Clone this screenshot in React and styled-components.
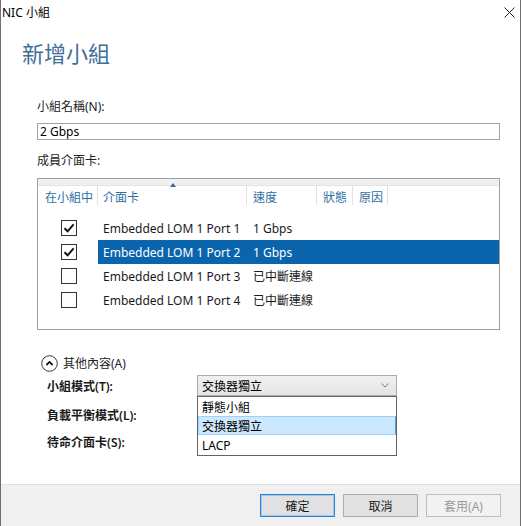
import React from "react";
import styled, { createGlobalStyle } from "styled-components";

const Global = createGlobalStyle`
  html, body { margin: 0; padding: 0; background: #fff; }
  body {
    font-family: "Segoe UI", "Noto Sans", "Noto Sans CJK TC", sans-serif;
    font-size: 12px;
    color: #1a1a1a;
  }
`;

const Window = styled.div`
  width: 521px;
  height: 526px;
  box-sizing: border-box;
  border-left: 1px solid #6f6f6f;
  border-right: 1px solid #6f6f6f;
  display: flex;
  flex-direction: column;
  background: #fff;
  position: relative;
`;

const TitleBar = styled.div`
  height: 24px;
  display: flex;
  align-items: center;
  justify-content: space-between;
  padding: 0 5px 0 1px;
  font-size: 12px;
  color: #000;
`;

const Heading = styled.h1`
  margin: 17px 0 0 21px;
  font-size: 22px;
  font-weight: 400;
  line-height: 24px;
  color: #3f6f96;
`;

const Body = styled.div`
  padding: 0 20px 0 36px;
  display: flex;
  flex-direction: column;
`;

const Label = styled.div`
  margin-top: ${(p) => p.$top}px;
  line-height: 16px;
  color: #222;
`;

const TextBox = styled.div`
  margin-top: 8px;
  height: 17px;
  border: 1px solid #a3a3a3;
  box-sizing: border-box;
  padding: 0 2px;
  line-height: 15px;
  color: #000;
`;

const ListBox = styled.div`
  margin-top: 9px;
  height: 152px;
  border: 1px solid #a0a0a0;
  box-sizing: border-box;
  display: flex;
  flex-direction: column;
`;

const TopStrip = styled.div`
  height: 6px;
  background: #f0f0f0;
  border-bottom: 1px solid #e3e3e3;
`;

const HeaderRow = styled.div`
  display: flex;
  height: 19px;
  margin-bottom: 11px;
`;

const HeadCell = styled.div`
  width: ${(p) => p.$w}px;
  flex: ${(p) => (p.$w ? "none" : "1")};
  box-sizing: border-box;
  border-right: ${(p) => (p.$last ? "none" : "1px solid #e2e2e2")};
  padding-left: ${(p) => p.$pad ?? 6}px;
  color: #2f6ea5;
  line-height: 24px;
  position: relative;
  white-space: nowrap;
`;

const SortArrow = styled.span`
  position: absolute;
  left: 72px;
  top: -3px;
  width: 0;
  height: 0;
  border-left: 3px solid transparent;
  border-right: 3px solid transparent;
  border-bottom: 4px solid #3c6e96;
`;

const Row = styled.div`
  display: flex;
  height: 24px;
  align-items: center;
`;

const CheckCell = styled.div`
  width: 60px;
  display: flex;
  align-items: center;
  padding-left: 23px;
  box-sizing: border-box;
`;

const Check = styled.div`
  width: 16px;
  height: 16px;
  box-sizing: border-box;
  border: 1px solid #333;
  background: #fff;
  display: flex;
  align-items: center;
  justify-content: center;
`;

const RowBody = styled.div`
  flex: 1;
  height: 24px;
  display: flex;
  align-items: center;
  background: ${(p) => (p.$selected ? "#0b65ad" : "transparent")};
  color: ${(p) => (p.$selected ? "#fff" : "#1a1a1a")};
`;

const Cell = styled.div`
  width: ${(p) => p.$w}px;
  padding-left: ${(p) => p.$pad}px;
  box-sizing: border-box;
  white-space: nowrap;
`;

const Expander = styled.div`
  margin-top: 24px;
  margin-left: 4px;
  display: flex;
  align-items: center;
  gap: 5px;
  height: 18px;
  color: #222;
`;

const FieldRow = styled.div`
  display: flex;
  align-items: center;
  height: ${(p) => p.$h}px;
  margin-top: ${(p) => p.$top}px;
  padding-left: 10px;
`;

const FieldLabel = styled.div`
  width: 150px;
  font-weight: 600;
  color: #1a1a1a;
`;

const ComboWrap = styled.div`
  position: relative;
  width: 200px;
`;

const Combo = styled.div`
  height: 21px;
  box-sizing: border-box;
  border: 1px solid #acacac;
  background: linear-gradient(#f0f0f0, #e5e5e5);
  display: flex;
  align-items: center;
  justify-content: space-between;
  padding: 0 7px 0 4px;
  color: #000;
`;

const DropList = styled.div`
  position: absolute;
  top: 21px;
  left: 0;
  width: 200px;
  box-sizing: border-box;
  border: 1px solid #646464;
  background: #fff;
  z-index: 2;
  padding-bottom: 1px;
`;

const DropItem = styled.div`
  height: 19px;
  line-height: 19px;
  box-sizing: border-box;
  padding-left: 3px;
  color: #000;
  background: ${(p) => (p.$active ? "#cce8ff" : "#fff")};
  border: 1px solid ${(p) => (p.$active ? "#99d1ff" : "transparent")};
  border-right-color: ${(p) => (p.$active ? "#5a9ccf" : "transparent")};
`;

const Footer = styled.div`
  margin-top: auto;
  height: 42px;
  box-sizing: border-box;
  background: #f0f0f0;
  border-top: 1px solid #dfdfdf;
  display: flex;
  justify-content: flex-end;
  align-items: flex-start;
  padding: 9px 19px 0 0;
  gap: 8px;
`;

const Button = styled.button`
  width: 75px;
  height: 23px;
  box-sizing: border-box;
  font: inherit;
  padding: 0;
  border: 1px solid
    ${(p) => (p.$primary ? "#2f7fd0" : p.disabled ? "#bfbfbf" : "#adadad")};
  background: ${(p) => (p.disabled ? "#f2f2f2" : "#e1e1e1")};
  color: ${(p) => (p.disabled ? "#9a9a9a" : "#1a1a1a")};
  box-shadow: ${(p) => (p.$primary ? "inset 0 0 0 1px #9fcaf0" : "none")};
`;

const nics = [
  { name: "Embedded LOM 1 Port 1", speed: "1 Gbps", checked: true },
  { name: "Embedded LOM 1 Port 2", speed: "1 Gbps", checked: true, selected: true },
  { name: "Embedded LOM 1 Port 3", speed: "已中斷連線" },
  { name: "Embedded LOM 1 Port 4", speed: "已中斷連線" },
];

function CheckMark() {
  return (
    <svg width="12" height="12" viewBox="0 0 12 12">
      <path d="M1.5 6.2 L4.6 9.3 L10.6 2.4" fill="none" stroke="#111" strokeWidth="2" />
    </svg>
  );
}

export default function App() {
  return (
    <>
      <Global />
      <Window>
        <TitleBar>
          <span>NIC 小組</span>
          <svg width="11" height="11" viewBox="0 0 11 11">
            <path d="M0.5 0.5 L10.5 10.5 M10.5 0.5 L0.5 10.5" stroke="#222" strokeWidth="1" />
          </svg>
        </TitleBar>
        <Heading>新增小組</Heading>
        <Body>
          <Label $top={34}>小組名稱(N):</Label>
          <TextBox>2 Gbps</TextBox>
          <Label $top={13}>成員介面卡:</Label>
          <ListBox>
            <TopStrip />
            <HeaderRow>
              <HeadCell $w={60} $pad={7}>在小組中</HeadCell>
              <HeadCell $w={149} $pad={5}>
                <SortArrow />
                介面卡
              </HeadCell>
              <HeadCell $w={70}>速度</HeadCell>
              <HeadCell $w={36}>狀態</HeadCell>
              <HeadCell $w={35}>原因</HeadCell>
              <HeadCell $last />
            </HeaderRow>
            {nics.map((n) => (
              <Row key={n.name}>
                <CheckCell>
                  <Check>{n.checked && <CheckMark />}</Check>
                </CheckCell>
                <RowBody $selected={n.selected}>
                  <Cell $w={149} $pad={5}>{n.name}</Cell>
                  <Cell $w={100} $pad={6}>{n.speed}</Cell>
                </RowBody>
              </Row>
            ))}
          </ListBox>
          <Expander>
            <svg width="17" height="17" viewBox="0 0 17 17">
              <circle cx="8.5" cy="8.5" r="7.8" fill="none" stroke="#333" strokeWidth="1" />
              <path d="M5.4 10 L8.5 6.9 L11.6 10" fill="none" stroke="#111" strokeWidth="1.8" />
            </svg>
            <span>其他內容(A)</span>
          </Expander>
          <FieldRow $h={21} $top={3}>
            <FieldLabel>小組模式(T):</FieldLabel>
            <ComboWrap>
              <Combo>
                <span>交換器獨立</span>
                <svg width="8" height="5" viewBox="0 0 8 5">
                  <path d="M0.5 0.5 L4 4 L7.5 0.5" fill="none" stroke="#7a7a7a" strokeWidth="1" />
                </svg>
              </Combo>
              <DropList>
                <DropItem>靜態小組</DropItem>
                <DropItem $active>交換器獨立</DropItem>
                <DropItem>LACP</DropItem>
              </DropList>
            </ComboWrap>
          </FieldRow>
          <FieldRow $h={21} $top={8}>
            <FieldLabel>負載平衡模式(L):</FieldLabel>
          </FieldRow>
          <FieldRow $h={21} $top={6}>
            <FieldLabel>待命介面卡(S):</FieldLabel>
          </FieldRow>
        </Body>
        <Footer>
          <Button $primary>確定</Button>
          <Button>取消</Button>
          <Button disabled>套用(A)</Button>
        </Footer>
      </Window>
    </>
  );
}
